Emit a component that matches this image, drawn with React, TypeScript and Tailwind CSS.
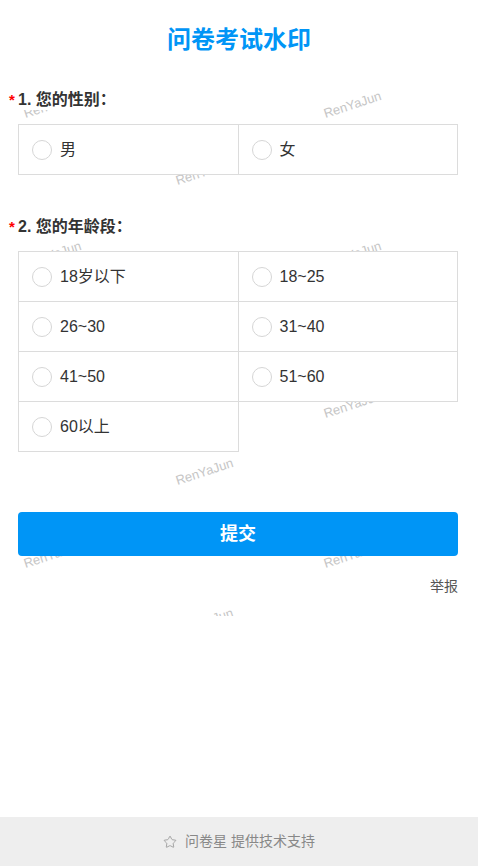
import { Star } from "lucide-react";

const genderOptions = ["男", "女"];
const ageOptions = ["18岁以下", "18~25", "26~30", "31~40", "41~50", "51~60", "60以上"];

// watermark tiles, positions relative to the form section
const marks = [
  "left-[26px] top-[27px]",
  "left-[326px] top-[27px]",
  "left-[178px] top-[94px]",
  "left-[26px] top-[177px]",
  "left-[326px] top-[177px]",
  "left-[178px] top-[244px]",
  "left-[26px] top-[327px]",
  "left-[326px] top-[327px]",
  "left-[178px] top-[394px]",
  "left-[26px] top-[477px]",
  "left-[326px] top-[477px]",
  "left-[178px] top-[544px]",
];

const QuestionTitle = ({ text }: { text: string }) => (
  <div className="flex items-start -ml-[9px]">
    <span className="w-[9px] text-[15px] leading-[14px] pt-[3px] font-bold text-[#ff0000]">*</span>
    <span className="bg-white text-[16px] leading-[20px] font-bold text-[#333333]">{text}</span>
  </div>
);

const OptionTable = ({ options }: { options: string[] }) => (
  <div className="grid grid-cols-2 border-l border-t border-[#dcdcdc]">
    {options.map((opt) => (
      <div
        key={opt}
        className="h-[50px] flex items-center gap-[8px] pl-[13px] bg-white border-r border-b border-[#dcdcdc]"
      >
        <span className="w-[20px] h-[20px] rounded-full border border-[#d6d6d6] bg-white shrink-0"></span>
        <span className="text-[16px] leading-[20px] text-[#333333]">{opt}</span>
      </div>
    ))}
  </div>
);

export default function App() {
  return (
    <div className="min-h-screen flex flex-col bg-white font-['Liberation_Sans','Noto_Sans_CJK_SC',sans-serif]">
      <div className="h-[80px] flex items-center justify-center">
        <h1 className="text-[24px] leading-[28px] font-bold text-[#0095f6]">问卷考试水印</h1>
      </div>

      <div className="relative overflow-hidden">
        <div className="absolute inset-0 pointer-events-none">
          {marks.map((pos) => (
            <span
              key={pos}
              className={`absolute ${pos} text-[13px] leading-[13px] whitespace-nowrap text-[#c6c6c6] origin-bottom-left rotate-[-18deg]`}
            >
              RenYaJun
            </span>
          ))}
        </div>

        <div className="relative pl-[18px] pr-[20px] pt-[10px] pb-[20px]">
          <QuestionTitle text="1. 您的性别：" />
          <div className="mt-[14px]">
            <OptionTable options={genderOptions} />
          </div>

          <div className="mt-[42px]">
            <QuestionTitle text="2. 您的年龄段：" />
          </div>
          <div className="mt-[14px]">
            <OptionTable options={ageOptions} />
          </div>

          <button className="mt-[60px] w-full h-[44px] rounded-[4px] bg-[#0095f6] text-white text-[18px] font-bold">
            提交
          </button>

          <div className="mt-[20px] flex justify-end">
            <span className="text-[14px] leading-[20px] text-[#555555]">举报</span>
          </div>
        </div>
      </div>

      <div className="mt-auto h-[49px] bg-[#eeeeee] flex items-center justify-center gap-[8px]">
        <Star size={14} strokeWidth={1.5} className="text-[#999999]" />
        <span className="text-[14px] text-[#888888]">问卷星 提供技术支持</span>
      </div>
    </div>
  );
}
